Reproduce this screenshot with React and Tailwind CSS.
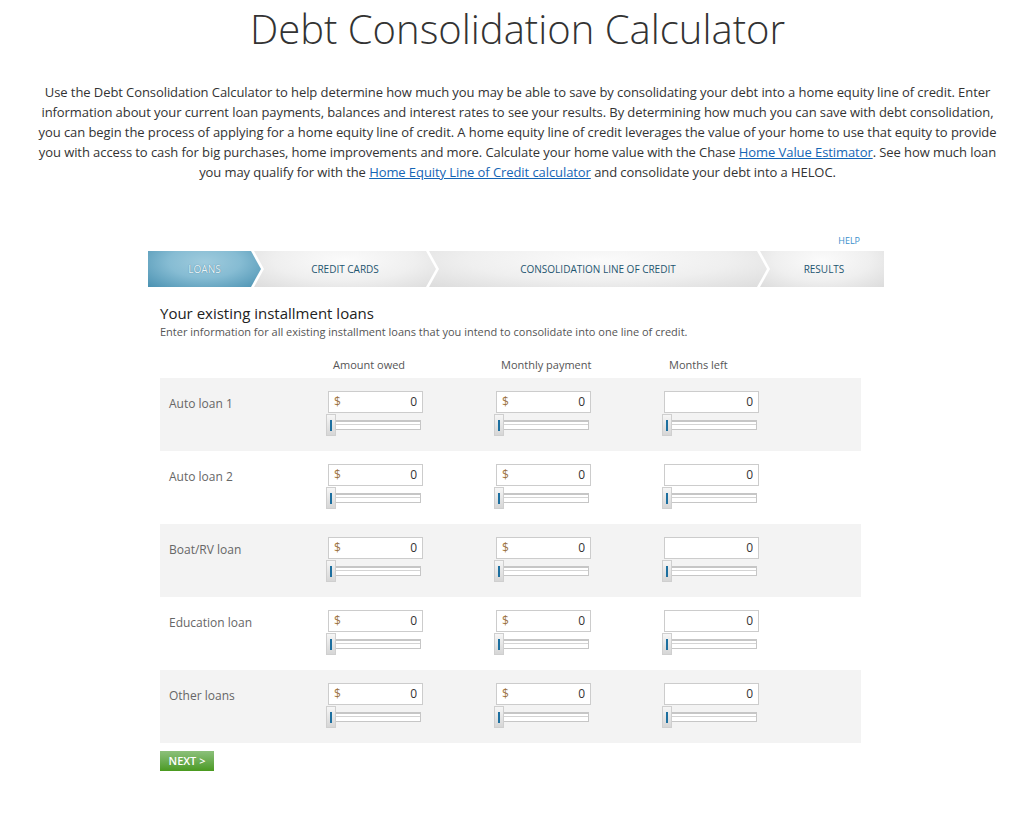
import { useState } from "react";

const font = { fontFamily: '"Open Sans", "Liberation Sans", sans-serif' };

const loans = ["Auto loan 1", "Auto loan 2", "Boat/RV loan", "Education loan", "Other loans"];

const steps = [
  { label: "Loans", width: "w-[113px]", active: true, first: true },
  { label: "Credit cards", width: "w-[182px]" },
  { label: "Consolidation line of credit", width: "w-[338px]" },
  { label: "Results", width: "w-[124px]", last: true },
];

const Slider = () => (
  <div className="relative mt-px h-[23px] w-[95px]">
    <div className="absolute left-[2px] top-[6px] h-[10px] w-[91px] border-t-2 border-r border-b border-[#c6c6c6] bg-white">
      <div className="mt-[2px] h-px w-full bg-[#d4d4d4]" />
    </div>
    <div className="absolute left-[-2px] top-0 h-[22px] w-[10px] border border-[#cfcfcf] bg-gradient-to-b from-[#f6f6f6] to-[#d6d6d6]">
      <div className="mx-auto mt-[5px] h-[11px] w-[2px] bg-[#1d6f9f]" />
    </div>
  </div>
);

const MoneyField = ({ dollar }) => {
  const [value, setValue] = useState("0");
  return (
    <div className="w-[168px]">
      <div className="flex h-[22px] w-[95px] items-center border border-[#cccccc] bg-white px-[5px] text-[12px]">
        {dollar && <span className="text-[#9c7443]">$</span>}
        <input
          value={value}
          onChange={(e) => setValue(e.target.value)}
          className="min-w-0 flex-1 bg-transparent text-right text-[#333] outline-none"
        />
      </div>
      <Slider />
    </div>
  );
};

const StepBar = () => (
  <div className="flex h-[36px] w-[736px]">
    {steps.map((step) => (
      <div
        key={step.label}
        className={[
          step.width,
          "flex shrink-0 items-center justify-center text-[10px] uppercase",
          step.first ? "" : "-ml-[7px]",
          step.first
            ? "[clip-path:polygon(0_0,calc(100%_-_10px)_0,100%_50%,calc(100%_-_10px)_100%,0_100%)]"
            : step.last
            ? "pl-[4px] [clip-path:polygon(0_0,100%_0,100%_100%,0_100%,10px_50%)]"
            : "[clip-path:polygon(0_0,calc(100%_-_10px)_0,100%_50%,calc(100%_-_10px)_100%,0_100%,10px_50%)]",
          step.active
            ? "bg-[radial-gradient(ellipse_at_50%_30%,#9fcbdd_0%,#86bcd3_45%,#4a91b1_100%)] text-[#eaf5fa] [text-shadow:0_0_1px_#2f6a85]"
            : "bg-[radial-gradient(ellipse_at_50%_25%,#fbfbfb_0%,#efefef_55%,#dcdcdc_100%)] text-[#1f5671]",
        ].join(" ")}
      >
        {step.label}
      </div>
    ))}
  </div>
);

export default function App() {
  return (
    <main className="min-h-[816px] w-full bg-white pb-10" style={font}>
      <h1 className="pt-[4px] text-center text-[40px] font-light leading-[50px] text-[#333]">
        Debt Consolidation Calculator
      </h1>

      <p className="mx-auto mt-[28px] px-[36px] text-center text-[13px] leading-[20px] tracking-[-0.08px] text-[#333]">
        Use the Debt Consolidation Calculator to help determine how much you may be able to save by
        consolidating your debt into a home equity line of credit. Enter information about your current
        loan payments, balances and interest rates to see your results. By determining how much you can
        save with debt consolidation, you can begin the process of applying for a home equity line of
        credit. A home equity line of credit leverages the value of your home to use that equity to
        provide you with access to cash for big purchases, home improvements and more. Calculate your
        home value with the Chase{" "}
        <a href="#" className="text-[#1565b5] underline">
          Home Value Estimator
        </a>
        . See how much loan you may qualify for with the{" "}
        <a href="#" className="text-[#1565b5] underline">
          Home Equity Line of Credit calculator
        </a>{" "}
        and consolidate your debt into a HELOC.
      </p>

      <section className="ml-[148px] mt-[52px] w-[736px]">
        <div className="flex justify-end pr-[24px]">
          <a href="#" className="text-[9px] leading-[14px] text-[#3b8fcc]">
            HELP
          </a>
        </div>
        <div className="mt-[3px]">
          <StepBar />
        </div>

        <div className="pl-[12px] pr-[23px]">
          <h2 className="mt-[17px] text-[15px] leading-[18px] text-[#222]">
            Your existing installment loans
          </h2>
          <p className="mt-[2px] text-[11px] leading-[16px] text-[#555]">
            Enter information for all existing installment loans that you intend to consolidate into one
            line of credit.
          </p>

          <div className="mt-[17px] flex text-[11px] leading-[16px] text-[#555]">
            <div className="w-[168px]" />
            <div className="w-[168px] pl-[5px]">Amount owed</div>
            <div className="w-[168px] pl-[5px]">Monthly payment</div>
            <div className="w-[168px] pl-[5px]">Months left</div>
          </div>

          <div className="mt-[5px]">
            {loans.map((loan, i) => (
              <div
                key={loan}
                className={`flex h-[73px] pt-[13px] ${i % 2 === 0 ? "bg-[#f3f3f3]" : "bg-white"}`}
              >
                <div className="w-[168px] pl-[9px] pt-[5px] text-[12px] leading-[16px] text-[#666]">
                  {loan}
                </div>
                <MoneyField dollar />
                <MoneyField dollar />
                <MoneyField />
              </div>
            ))}
          </div>

          <button
            type="button"
            className="mt-[8px] h-[20px] w-[54px] bg-gradient-to-b from-[#8cc07a] to-[#4a9a1d] text-[11px] font-semibold text-white"
          >
            NEXT &gt;
          </button>
        </div>
      </section>
    </main>
  );
}
